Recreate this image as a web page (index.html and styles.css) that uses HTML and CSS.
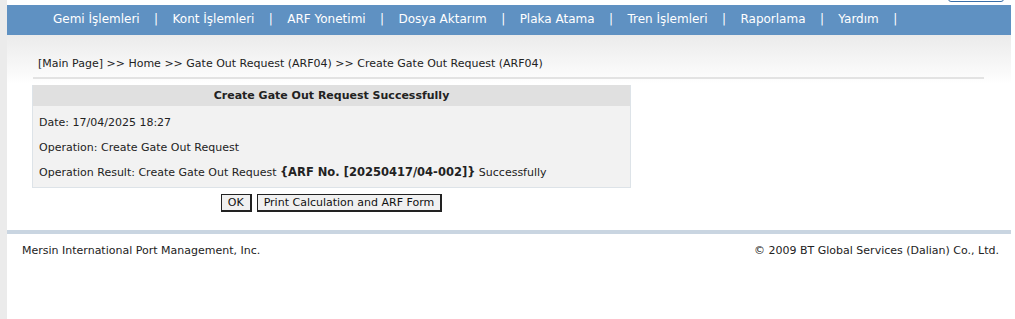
FILE: index.html
```html
<!DOCTYPE html>
<html lang="tr">
<head>
    <meta charset="UTF-8">
    <title>Create Gate Out Request</title>
    <link rel="stylesheet" href="styles.css">
</head>
<body>
    <div class="page">
        <!-- Top strip -->
        <div class="top-strip">
            <span class="logout-btn"></span>
        </div>

        <!-- Main Menu -->
        <div class="main-menu">
            <a class="menu-item">Gemi İşlemleri</a><span class="menu-sep">|</span>
            <a class="menu-item">Kont İşlemleri</a><span class="menu-sep">|</span>
            <a class="menu-item">ARF Yonetimi</a><span class="menu-sep">|</span>
            <a class="menu-item">Dosya Aktarım</a><span class="menu-sep">|</span>
            <a class="menu-item">Plaka Atama</a><span class="menu-sep">|</span>
            <a class="menu-item">Tren İşlemleri</a><span class="menu-sep">|</span>
            <a class="menu-item">Raporlama</a><span class="menu-sep">|</span>
            <a class="menu-item">Yardım</a><span class="menu-sep">|</span>
        </div>

        <!-- Breadcrumb -->
        <div class="crumb-area">
            <div class="crumb">[Main Page] &gt;&gt; Home &gt;&gt; Gate Out Request (ARF04) &gt;&gt; Create Gate Out Request (ARF04)</div>
        </div>

        <!-- Result Box -->
        <div class="content">
            <div class="result-box">
                <div class="result-title">Create Gate Out Request Successfully</div>
                <div class="result-body">
                    <div class="result-row">Date: 17/04/2025 18:27</div>
                    <div class="result-row">Operation: Create Gate Out Request</div>
                    <div class="result-row">Operation Result: Create Gate Out Request <b class="arf-no">{ARF No. [20250417/04-002]}</b> Successfully</div>
                </div>
            </div>
            <div class="button-row">
                <button class="btn">OK</button>
                <button class="btn">Print Calculation and ARF Form</button>
            </div>
        </div>

        <!-- Footer -->
        <div class="footer">
            <span>Mersin International Port Management, Inc.</span>
            <span>© 2009 BT Global Services (Dalian) Co., Ltd.</span>
        </div>
    </div>
</body>
</html>
```

FILE: styles.css
```css
body {
    margin: 0;
    padding: 0;
    font-family: "DejaVu Sans", Verdana, sans-serif;
    font-size: 11px;
    color: #222;
    background: #fff;
}

.page {
    width: 1004px;
    min-height: 100vh;
    border-left: 7px solid #ebebeb;
    background: #fff;
}

.top-strip {
    position: relative;
    height: 5px;
}

.logout-btn {
    position: absolute;
    right: 7px;
    top: -20px;
    width: 54px;
    height: 20px;
    border: 1px solid #3b6fa8;
    border-radius: 3px;
}

.main-menu {
    display: flex;
    align-items: center;
    gap: 13.4px;
    height: 27px;
    padding: 0 0 3px 46px;
    background: #5f91c2;
    color: #fff;
    font-family: "DejaVu Sans", Tahoma, sans-serif;
    font-size: 12px;
}

.menu-item {
    color: #fff;
    text-decoration: none;
}

.menu-sep {
    padding: 0 1px;
}

.crumb-area {
    height: 48px;
    background: linear-gradient(#ebebeb, #fbfbfb 85%, #fff);
    padding: 0 27px 0 26px;
}

.crumb {
    padding: 22px 0 0 5px;
    height: 20px;
    border-bottom: 2px solid #e3e3e3;
}

.content {
    padding: 2px 0 0 25px;
    width: 599px;
}

.result-box {
    border: 1px solid #dde3e8;
    border-top: none;
}

.result-title {
    height: 21px;
    line-height: 22px;
    background: #e0e0e0;
    text-align: center;
    font-weight: bold;
}

.result-body {
    background: #f2f2f2;
    padding: 4px 6px 2px;
}

.result-row {
    height: 25px;
    line-height: 25px;
}

.arf-no {
    font-size: 11.5px;
}

.button-row {
    display: flex;
    justify-content: center;
    gap: 5px;
    padding-top: 6px;
}

.btn {
    height: 18px;
    padding: 0 6px;
    font-family: "DejaVu Sans", Verdana, sans-serif;
    font-size: 11px;
    color: #111;
    background: #f0f0f0;
    border-style: solid;
    border-color: #222;
    border-width: 1px 2px 2px 1px;
}

.footer {
    display: flex;
    justify-content: space-between;
    margin-top: 18px;
    padding: 10px 12px 0 15px;
    border-top: 4px solid #c9d5e1;
}
```
